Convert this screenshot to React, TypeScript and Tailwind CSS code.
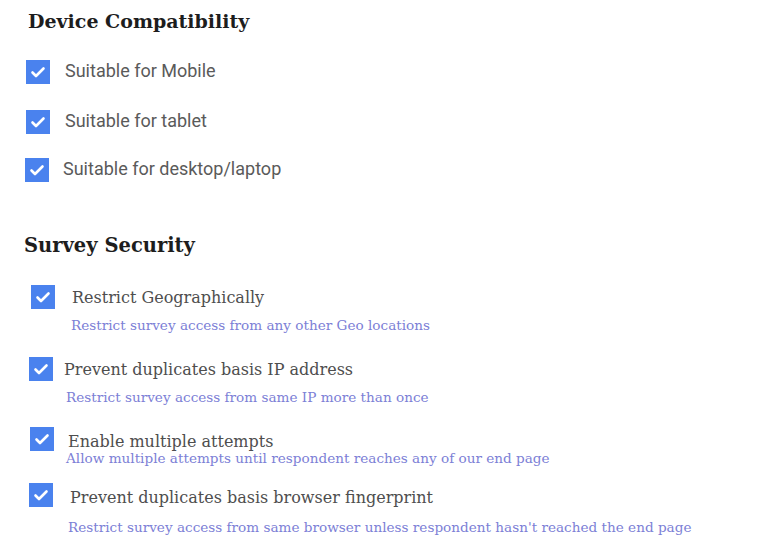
const Check = () => (
  <span className="flex h-6 w-6 shrink-0 items-center justify-center bg-[#4a82ee]">
    <svg viewBox="0 0 24 24" className="h-6 w-6" fill="none" stroke="white" strokeWidth="2.6" strokeLinecap="round" strokeLinejoin="round">
      <polyline points="6.5,12.5 10,16 17.5,8.5" />
    </svg>
  </span>
);

const device = [
  { label: 'Suitable for Mobile', row: 'mt-[26px] ml-[26px] gap-[15px]' },
  { label: 'Suitable for tablet', row: 'mt-[26px] ml-[26px] gap-[15px]' },
  { label: 'Suitable for desktop/laptop', row: 'mt-[24px] ml-[25px] gap-[14px]' },
];

const security = [
  {
    label: 'Restrict Geographically',
    sub: 'Restrict survey access from any other Geo locations',
    row: 'mt-[25px] ml-[31px] gap-[17px]',
    text: 'translate-y-[1px]',
    subCls: 'mt-[7px] ml-[71px]',
  },
  {
    label: 'Prevent duplicates basis IP address',
    sub: 'Restrict survey access from same IP more than once',
    row: 'mt-[23px] ml-[29px] gap-[11px]',
    text: 'translate-y-[1px]',
    subCls: 'mt-[7px] ml-[66px]',
  },
  {
    label: 'Enable multiple attempts',
    sub: 'Allow multiple attempts until respondent reaches any of our end page',
    row: 'mt-[21px] ml-[30px] gap-[14px]',
    text: 'translate-y-[3px]',
    subCls: 'mt-[-2px] ml-[66px]',
  },
  {
    label: 'Prevent duplicates basis browser fingerprint',
    sub: "Restrict survey access from same browser unless respondent hasn't reached the end page",
    row: 'mt-[16px] ml-[29px] gap-[17px]',
    text: 'translate-y-[3px]',
    subCls: 'mt-[11px] ml-[68px]',
  },
];

export default function App() {
  return (
    <div className="h-[548px] w-[768px] overflow-hidden bg-white">
      <h2 className="ml-[28px] pt-[8px] text-[19px] leading-[26px] font-bold text-[#1d1d1d] [font-family:'DejaVu_Serif',serif]">
        Device Compatibility
      </h2>
      {device.map(d => (
        <div key={d.label} className={`flex items-center ${d.row}`}>
          <Check />
          <span className="-translate-y-[1px] text-[18px] leading-6 text-[#5a5a5a] [font-family:Roboto,sans-serif]">{d.label}</span>
        </div>
      ))}

      <h2 className="mt-[50px] ml-[24px] text-[19.5px] leading-[28px] font-bold text-[#1d1d1d] [font-family:'DejaVu_Serif',serif]">
        Survey Security
      </h2>
      {security.map(s => (
        <div key={s.label}>
          <div className={`flex items-center ${s.row}`}>
            <Check />
            <span className={`text-[16px] leading-6 text-[#4e4e4e] [font-family:'DejaVu_Serif',serif] ${s.text}`}>{s.label}</span>
          </div>
          <p className={`text-[13.6px] leading-[18px] text-[#7c80d6] [font-family:'DejaVu_Serif',serif] ${s.subCls}`}>{s.sub}</p>
        </div>
      ))}
    </div>
  );
}
